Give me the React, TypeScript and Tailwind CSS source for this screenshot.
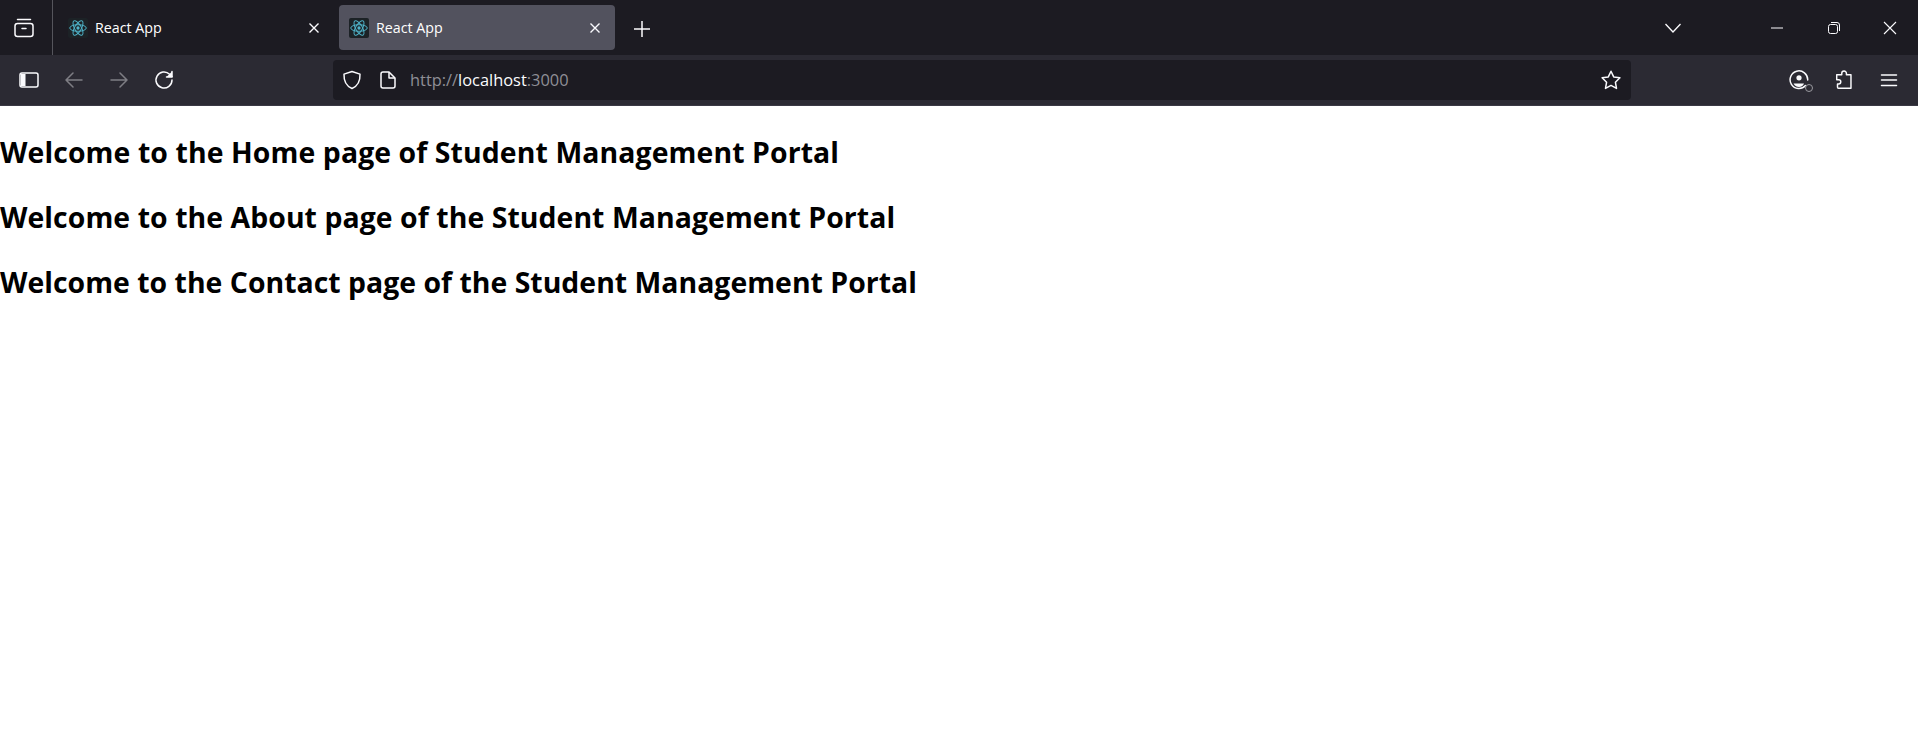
const ReactLogo = () => (
  <svg width="18" height="18" viewBox="-12 -12 24 24" fill="none" stroke="#4fb3c9" strokeWidth="1.3">
    <circle r="2.2" fill="#4fb3c9" stroke="none" />
    <ellipse rx="11" ry="4.4" />
    <ellipse rx="11" ry="4.4" transform="rotate(60)" />
    <ellipse rx="11" ry="4.4" transform="rotate(120)" />
  </svg>
);

const Tab = ({ active }: { active?: boolean }) => (
  <div className={`flex h-[45px] w-[276px] items-center rounded-[4px] pl-[10px] pr-[12px] ${active ? "bg-[#52525e]" : ""}`}>
    <div className="flex h-5 w-5 items-center justify-center rounded-[2px] bg-[#1c2226]">
      <ReactLogo />
    </div>
    <span className="ml-[7px] flex-1 pt-[1px] text-[14.25px] text-white">React App</span>
    <svg width="16" height="16" viewBox="0 0 16 16" stroke="#fbfbfe" strokeWidth="1.4" fill="none">
      <path d="M3.5 3.5l9 9M12.5 3.5l-9 9" />
    </svg>
  </div>
);

const Icon = ({ children, className = "" }: { children: React.ReactNode; className?: string }) => (
  <svg width="20" height="20" viewBox="0 0 20 20" fill="none" stroke="#fbfbfe" strokeWidth="1.5" strokeLinecap="round" strokeLinejoin="round" className={className}>
    {children}
  </svg>
);

export default function App() {
  return (
    <div className="flex min-h-[751px] flex-col bg-white font-['Open_Sans','Noto_Sans',sans-serif]">
      <div className="flex h-[55px] items-start bg-[#1c1b22]">
        <div className="flex h-[55px] w-[53px] items-center border-r border-[#55555c] pl-[14px]">
          <Icon>
            <rect x="1" y="5.5" width="18" height="13" rx="2.5" />
            <path d="M3.5 1.5h13M8 10.5h4" />
          </Icon>
        </div>
        <div className="mt-[5px] flex gap-[5px] pl-[5px]">
          <Tab />
          <Tab active />
        </div>
        <div className="ml-[19px] mt-[21px] flex h-4 w-4 items-center justify-center">
          <svg width="16" height="16" viewBox="0 0 16 16" stroke="#fbfbfe" strokeWidth="1.5"><path d="M8 0v16M0 8h16" /></svg>
        </div>
        <div className="ml-auto flex h-[55px] items-center">
          <svg width="18" height="18" viewBox="0 0 18 18" fill="none" stroke="#fbfbfe" strokeWidth="1.3" className="mr-[66px]"><path d="M1.5 5l7.5 8 7.5-8" /></svg>
          <div className="flex w-[57px] justify-center"><svg width="14" height="14" viewBox="0 0 14 14" stroke="#fbfbfe" strokeWidth="1"><path d="M1 7h12" /></svg></div>
          <div className="flex w-[57px] justify-center">
            <svg width="14" height="14" viewBox="0 0 14 14" stroke="#fbfbfe" strokeWidth="1" fill="none"><rect x="1.5" y="3.5" width="9" height="9" rx="2" /><path d="M4 1.5h6a2.5 2.5 0 012.5 2.5v6" /></svg>
          </div>
          <div className="flex w-[56px] justify-center"><svg width="14" height="14" viewBox="0 0 14 14" stroke="#fbfbfe" strokeWidth="1.1"><path d="M1 1l12 12M13 1L1 13" /></svg></div>
        </div>
      </div>

      <div className="flex h-[51px] items-center border-b border-[#3a3944] bg-[#2b2a33]">
        <div className="flex items-center gap-[25px] pl-[19px]">
          <Icon>
            <rect x="1" y="3" width="18" height="14" rx="2" />
            <rect x="2" y="4" width="4.5" height="12" fill="#fbfbfe" stroke="none" />
          </Icon>
          <Icon className="opacity-40"><path d="M18 10H2M9 3l-7 7 7 7" /></Icon>
          <Icon className="opacity-40"><path d="M2 10h16M11 3l7 7-7 7" /></Icon>
          <Icon>
            <path d="M18 10a8 8 0 11-2.4-5.7L18 6.5" />
            <path d="M18 1.5V7h-5.5" fill="#fbfbfe" />
          </Icon>
        </div>
        <div className="ml-[159px] flex h-[40px] w-[1298px] items-center rounded-[4px] bg-[#1c1b22] pl-[9px] pr-[10px]">
          <Icon>
            <path d="M10 1.5l8 2.6c.3 7-1.9 11.8-8 14.4-6.1-2.6-8.3-7.4-8-14.4z" />
          </Icon>
          <svg width="16" height="18" viewBox="0 0 16 18" fill="none" stroke="#fbfbfe" strokeWidth="1.5" strokeLinejoin="round" className="ml-[18px]">
            <path d="M1 3a2 2 0 012-2h6l6 6v8a2 2 0 01-2 2H3a2 2 0 01-2-2z" />
            <path d="M9 1v6h6" />
          </svg>
          <span className="ml-[14px] flex-1 pt-[1px] text-[16.4px] text-[#8f8f96]">
            http://<span className="text-[#fbfbfe]">localhost</span>:3000
          </span>
          <Icon>
            <path d="M10 1.2l2.7 5.7 6.2.9-4.5 4.4 1.1 6.2-5.5-3-5.5 3 1.1-6.2L1.1 7.8l6.2-.9z" />
          </Icon>
        </div>
        <div className="ml-auto flex items-center gap-[25px] pr-[19px]">
          <div className="relative h-5 w-5">
            <Icon>
              <path d="M16.5 15.5A8.8 8.8 0 1118.7 10" />
              <circle cx="10" cy="7.8" r="2.6" fill="#fbfbfe" stroke="none" />
              <path d="M4.5 13.5h10.5c-.8 2.5-3 3.5-5 3.5s-4.5-1-5.5-3.5z" fill="#fbfbfe" stroke="none" />
            </Icon>
            <span className="absolute -bottom-[2px] -right-[4px] h-[8px] w-[8px] rounded-full border-[1.5px] border-[#9a9aa0] bg-[#2b2a33]" />
          </div>
          <Icon>
            <path d="M8 4.8V3.4a2.4 2.4 0 014.8 0v1.4h4.7v14H4.6a1 1 0 01-1-1v-3.4h1.2a2.2 2.2 0 000-4.4H2.8V4.8z" transform="scale(.97)" />
          </Icon>
          <Icon><path d="M2.5 5h15M2.5 10h15M2.5 15.5h15" /></Icon>
        </div>
      </div>

      <main className="text-black">
        <h1 className="mt-[27px] text-[28.4px] leading-[38px] font-bold tracking-[0.1px]">Welcome to the Home page of Student Management Portal</h1>
        <h1 className="mt-[27px] text-[28.4px] leading-[38px] font-bold tracking-[0.07px]">Welcome to the About page of the Student Management Portal</h1>
        <h1 className="mt-[27px] text-[28.4px] leading-[38px] font-bold tracking-[0.02px]">Welcome to the Contact page of the Student Management Portal</h1>
      </main>
    </div>
  );
}
